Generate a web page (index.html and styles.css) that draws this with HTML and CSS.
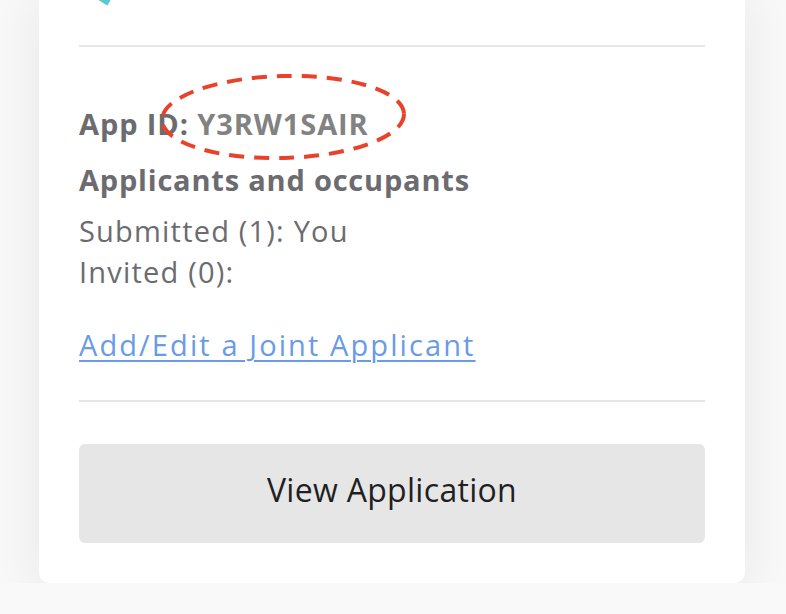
FILE: index.html
```html
<!DOCTYPE html>
<html lang="en">
<head>
<meta charset="utf-8">
<title>Application</title>
<link rel="stylesheet" href="styles.css">
</head>
<body>
<div class="card">
  <div class="top">
    <svg class="ring-tail" width="40" height="10" viewBox="0 0 40 10" aria-hidden="true">
      <path d="M8 -8 Q18 -1 25 3" fill="none" stroke="#5cc8d2" stroke-width="6" stroke-linecap="butt"/>
    </svg>
  </div>
  <div class="info">
    <p class="app-id"><span class="label">App ID:</span> <span class="value">Y3RW1SAIR</span></p>
    <p class="heading">Applicants and occupants</p>
    <p class="line">Submitted (1): You</p>
    <p class="line">Invited (0):</p>
    <a class="link" href="#">Add/Edit a Joint Applicant</a>
    <svg class="circle-mark" width="260" height="96" viewBox="0 0 260 96" aria-hidden="true">
      <ellipse cx="128" cy="47" rx="121" ry="41" fill="none" stroke="#e8432a" stroke-width="4" stroke-dasharray="15 10" transform="rotate(-1.5 128 47)"/>
    </svg>
  </div>
  <button class="btn" type="button">View Application</button>
</div>
</body>
</html>
```
FILE: styles.css
```css
* { box-sizing: border-box; }
body {
  margin: 0;
  background: #f9f9f9;
  font-family: "Open Sans", "Noto Sans", sans-serif;
}
.card {
  width: 706px;
  margin: -20px 0 0 39px;
  background: #fff;
  border-radius: 0 0 10px 10px;
  padding: 0 40px 40px;
  box-shadow: 0 12px 60px rgba(0,0,0,0.08);
}
.top {
  height: 67px;
  border-bottom: 2px solid #e6e6e6;
}
.ring-tail {
  display: block;
  margin-left: 5px;
  padding-top: 20px;
  height: 30px;
  width: 40px;
}
.info {
  position: relative;
  padding-top: 56px;
  padding-bottom: 35px;
  border-bottom: 2px solid #e6e6e6;
}
.info p { margin: 0; }
.app-id {
  font-size: 29px;
  line-height: 41px;
  font-weight: 700;
  letter-spacing: 0.9px;
  margin-bottom: 15px !important;
}
.label { color: #6b6b70; }
.value { color: #828282; }
.heading {
  font-size: 29px;
  line-height: 41px;
  font-weight: 700;
  letter-spacing: 0.8px;
  color: #6b6b70;
  margin-bottom: 10px !important;
}
.line {
  font-size: 29px;
  line-height: 41px;
  letter-spacing: 1.2px;
  color: #6b6b70;
}
.link {
  display: inline-block;
  margin-top: 32px;
  font-size: 29px;
  line-height: 41px;
  letter-spacing: 2.1px;
  color: #6a9be6;
  text-decoration: underline;
  text-decoration-thickness: 2px;
  text-underline-offset: 4px;
}
.circle-mark {
  position: absolute;
  left: 76px;
  top: 23px;
}
.btn {
  display: block;
  width: 100%;
  height: 99px;
  margin-top: 42px;
  padding: 0 0 8px;
  border: 0;
  border-radius: 6px;
  background: #e6e6e6;
  color: #1f1f24;
  font-family: "Open Sans", "Noto Sans", sans-serif;
  font-size: 32px;
  font-weight: 500;
  letter-spacing: 0.3px;
}
```
